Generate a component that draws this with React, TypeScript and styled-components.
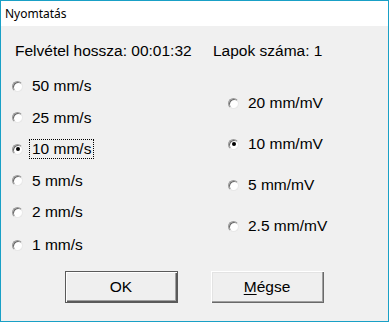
import React from 'react';
import styled, { createGlobalStyle } from 'styled-components';

const GlobalStyle = createGlobalStyle`
  html, body {
    margin: 0;
    padding: 0;
    background: #f0f0f0;
  }
`;

const Window = styled.div`
  width: 389px;
  height: 322px;
  box-sizing: border-box;
  border: 1px solid #19a0c6;
  background: #f0f0f0;
  display: flex;
  flex-direction: column;
  font-family: 'Liberation Sans', Arial, sans-serif;
  color: #000;
`;

const TitleBar = styled.div`
  height: 25px;
  flex-shrink: 0;
  background: #ffffff;
  display: flex;
  align-items: center;
  padding-left: 4px;
  font-family: 'Noto Sans', 'Open Sans', sans-serif;
  font-size: 12px;
  color: #000;
`;

const Body = styled.div`
  flex: 1;
  display: flex;
  flex-direction: column;
  padding-top: 16px;
  font-size: 15.5px;
`;

const InfoRow = styled.div`
  display: grid;
  grid-template-columns: 198px auto;
  padding-left: 14px;
  height: 18px;
  line-height: 18px;
`;

const Columns = styled.div`
  display: grid;
  grid-template-columns: 216px 1fr;
  padding-left: 11px;
  align-items: start;
`;

const OptionList = styled.div<{ $offset: number; $gap: number }>`
  display: flex;
  flex-direction: column;
  gap: ${p => p.$gap}px;
  margin-top: ${p => p.$offset}px;
`;

const Option = styled.label<{ $extra?: number }>`
  display: flex;
  align-items: center;
  height: 18px;
  line-height: 18px;
  margin-top: ${p => p.$extra ?? 0}px;
  cursor: default;
`;

const RadioCircle = styled.span<{ $checked: boolean }>`
  width: 11px;
  height: 11px;
  box-sizing: border-box;
  border-radius: 50%;
  border: 1px solid;
  border-color: #9a9a9a #e8e8e8 #e8e8e8 #9a9a9a;
  box-shadow: inset 1px 1px 0 #6a6a6a;
  background: #ffffff;
  display: flex;
  align-items: center;
  justify-content: center;
  flex-shrink: 0;

  &::after {
    content: '';
    width: 4px;
    height: 4px;
    border-radius: 50%;
    background: ${p => (p.$checked ? '#000' : 'transparent')};
  }
`;

const OptionText = styled.span<{ $focused?: boolean }>`
  margin-left: ${p => (p.$focused ? '6px' : '9px')};
  padding: 0 ${p => (p.$focused ? '2px' : '0')};
  border: ${p => (p.$focused ? '1px dotted #000' : 'none')};
  line-height: ${p => (p.$focused ? '18px' : '18px')};
  white-space: nowrap;
`;

const Footer = styled.div`
  margin-top: auto;
  padding-bottom: 18px;
  display: flex;
  justify-content: center;
  gap: 33px;
  padding-right: 1px;
`;

const Button = styled.button<{ $default?: boolean }>`
  width: 113px;
  height: 32px;
  box-sizing: border-box;
  background: #efefef;
  font-family: 'Liberation Sans', Arial, sans-serif;
  font-size: 15.5px;
  color: #000;
  padding: 0;
  border: ${p => (p.$default ? '1px solid #5a5a5a' : 'none')};
  box-shadow: ${p =>
    p.$default
      ? 'inset 1px 1px 0 #ffffff, inset -1px -1px 0 #5a5a5a, inset -2px -2px 0 #a0a0a0'
      : 'inset 1px 1px 0 #ffffff, inset -1px -1px 0 #696969, inset -2px -2px 0 #a0a0a0, inset 2px 2px 0 #e3e3e3'};
  cursor: default;
`;

const AccessKey = styled.span`
  text-decoration: underline;
  text-underline-offset: 2px;
`;

const speeds = ['50 mm/s', '25 mm/s', '10 mm/s', '5 mm/s', '2 mm/s', '1 mm/s'];
const gains = ['20 mm/mV', '10 mm/mV', '5 mm/mV', '2.5 mm/mV'];

export default function App() {
  const [speed, setSpeed] = React.useState('10 mm/s');
  const [gain, setGain] = React.useState('10 mm/mV');

  return (
    <>
      <GlobalStyle />
      <Window>
        <TitleBar>Nyomtatás</TitleBar>
        <Body>
          <InfoRow>
            <span>Felvétel hossza: 00:01:32</span>
            <span>Lapok száma: 1</span>
          </InfoRow>
          <Columns>
            <OptionList $offset={17} $gap={13.5}>
              {speeds.map((s, i) => (
                <Option key={s} $extra={i === speeds.length - 1 ? 1.5 : 0} onClick={() => setSpeed(s)}>
                  <RadioCircle $checked={speed === s} />
                  <OptionText $focused={speed === s}>{s}</OptionText>
                </Option>
              ))}
            </OptionList>
            <OptionList $offset={34} $gap={23}>
              {gains.map(g => (
                <Option key={g} onClick={() => setGain(g)}>
                  <RadioCircle $checked={gain === g} />
                  <OptionText>{g}</OptionText>
                </Option>
              ))}
            </OptionList>
          </Columns>
          <Footer>
            <Button $default>OK</Button>
            <Button>
              <AccessKey>M</AccessKey>égse
            </Button>
          </Footer>
        </Body>
      </Window>
    </>
  );
}
